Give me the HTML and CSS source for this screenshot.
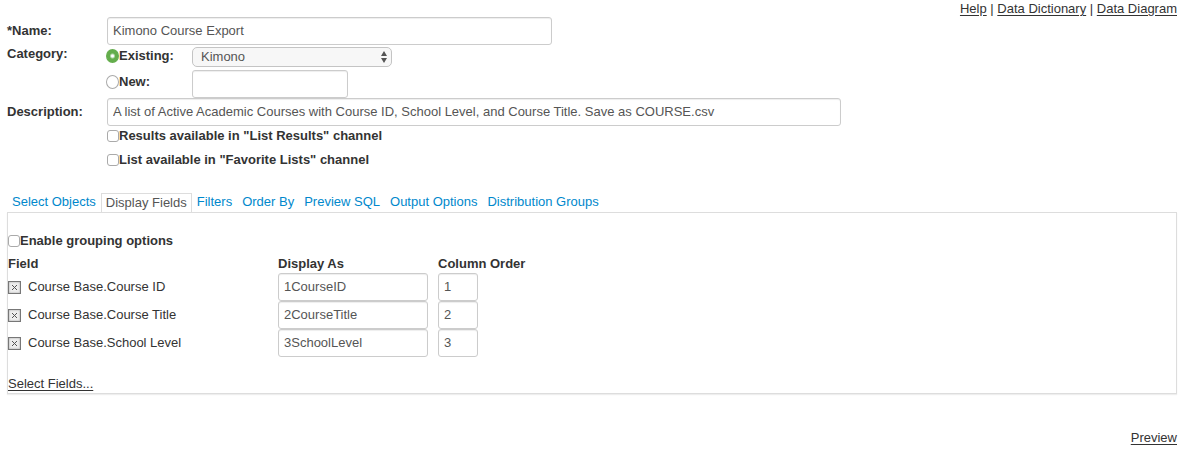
FILE: index.html
```html
<!DOCTYPE html>
<html lang="en">
<head>
<meta charset="utf-8">
<title>List Editor</title>
<link rel="stylesheet" href="styles.css">
</head>
<body>
<nav class="top-links"><a href="#">Help</a> | <a href="#">Data Dictionary</a> | <a href="#">Data Diagram</a></nav>
<form class="details">
  <label class="form-label" for="name">*Name:</label>
  <input class="text name-input" id="name" type="text" value="Kimono Course Export">

  <span class="form-label category-label">Category:</span>
  <div class="category">
    <label class="choice"><input class="radio" type="radio" name="category" checked>Existing:</label>
    <div class="select-wrap">
      <select class="select" aria-label="Existing category"><option>Kimono</option></select>
      <svg class="select-arrows" viewBox="0 0 6 12" aria-hidden="true"><path d="M3 0l3 5H0zM3 12l3-5H0z"/></svg>
    </div>
    <label class="choice"><input class="radio" type="radio" name="category">New:</label>
    <input class="text new-input" type="text" aria-label="New category">
  </div>

  <label class="form-label" for="description">Description:</label>
  <input class="text description-input" id="description" type="text" value="A list of Active Academic Courses with Course ID, School Level, and Course Title. Save as COURSE.csv">

  <div class="channels">
    <label class="choice"><input class="check" type="checkbox">Results available in "List Results" channel</label>
    <label class="choice"><input class="check" type="checkbox">List available in "Favorite Lists" channel</label>
  </div>
</form>

<nav class="tabs">
  <a class="tab" href="#">Select Objects</a>
  <a class="tab active" href="#">Display Fields</a>
  <a class="tab" href="#">Filters</a>
  <a class="tab" href="#">Order By</a>
  <a class="tab" href="#">Preview SQL</a>
  <a class="tab" href="#">Output Options</a>
  <a class="tab" href="#">Distribution Groups</a>
</nav>
<section class="panel">
  <label class="choice"><input class="check" type="checkbox">Enable grouping options</label>
  <table class="fields">
    <thead>
      <tr><th class="col-field">Field</th><th class="col-display">Display As</th><th>Column Order</th></tr>
    </thead>
    <tbody>
      <tr>
        <td><div class="field"><button class="remove" type="button" aria-label="Remove Course ID"><svg class="cross" viewBox="0 0 7 7"><path d="M1 1l5 5M6 1L1 6"/></svg></button>Course Base.Course ID</div></td>
        <td><input class="text display-input" type="text" value="1CourseID" aria-label="Display as"></td>
        <td><input class="text order-input" type="text" value="1" aria-label="Column order"></td>
      </tr>
      <tr>
        <td><div class="field"><button class="remove" type="button" aria-label="Remove Course Title"><svg class="cross" viewBox="0 0 7 7"><path d="M1 1l5 5M6 1L1 6"/></svg></button>Course Base.Course Title</div></td>
        <td><input class="text display-input" type="text" value="2CourseTitle" aria-label="Display as"></td>
        <td><input class="text order-input" type="text" value="2" aria-label="Column order"></td>
      </tr>
      <tr>
        <td><div class="field"><button class="remove" type="button" aria-label="Remove School Level"><svg class="cross" viewBox="0 0 7 7"><path d="M1 1l5 5M6 1L1 6"/></svg></button>Course Base.School Level</div></td>
        <td><input class="text display-input" type="text" value="3SchoolLevel" aria-label="Display as"></td>
        <td><input class="text order-input" type="text" value="3" aria-label="Column order"></td>
      </tr>
    </tbody>
  </table>
  <a class="select-fields" href="#">Select Fields...</a>
</section>
<footer class="footer"><a href="#">Preview</a></footer>
</body>
</html>
```
FILE: styles.css
```css
* { box-sizing: border-box; }
body {
  margin: 0;
  padding: 0 11px 0 7px;
  background: #fff;
  color: #333;
  font: 13px/20px "Liberation Sans", Arial, sans-serif;
}
a { color: #333; text-underline-offset: 2px; }
input, select, button { margin: 0; font: inherit; }

.top-links { text-align: right; line-height: 17px; }

.details {
  display: grid;
  grid-template-columns: 100px 1fr;
}
.form-label { font-weight: bold; line-height: 28px; }
.category-label { line-height: 18px; }
.text {
  display: block;
  max-width: 100%;
  height: 28px;
  padding: 0 5px 2px;
  border: 1px solid #ccc;
  border-radius: 3px;
  background: #fff;
  box-shadow: inset 0 1px 1px #eee;
  color: #555;
}
.name-input { width: 445px; }
.new-input { width: 156px; }
.description-input { width: 734px; }
.display-input { width: 150px; }
.order-input { width: 40px; }

.category {
  display: grid;
  grid-template-columns: 85px 200px;
  grid-template-rows: 25px 28px;
}
.choice {
  display: flex;
  align-items: center;
  font-weight: bold;
}
.category .choice { margin-left: -1px; line-height: 22px; align-self: start; }
.category .text { grid-column: 2; }
.radio, .check {
  appearance: none;
  flex: none;
  border: 1px solid #aaa;
  background: #fff;
}
.radio { width: 13px; height: 14px; border-radius: 50%; }
.radio:checked {
  border-color: #64ad4c;
  background: radial-gradient(circle, #fff 1px, #64ad4c 3px);
}
.check { width: 12px; height: 12px; border-radius: 3px; }

.select-wrap { position: relative; height: 20px; margin-top: 2px; }
.select {
  display: block;
  appearance: none;
  width: 100%;
  height: 20px;
  padding: 0 8px;
  border: 1px solid #c4c4c4;
  border-radius: 5px;
  background: #f7f7f7;
  color: #555;
  line-height: 18px;
}
.select-arrows {
  position: absolute;
  top: 4px;
  right: 5px;
  width: 6px;
  height: 12px;
  fill: #555;
}
.category .choice:nth-of-type(2) { line-height: 24px; }
.channels {
  grid-column: 2;
  display: grid;
  gap: 4px;
}

.tabs {
  display: flex;
  margin-top: 23px;
}
.tab {
  height: 19px;
  padding: 0 5px;
  color: #0088cc;
  line-height: 18px;
  text-decoration: none;
}
.active {
  position: relative;
  height: 19px;
  padding: 0 4px;
  border: 1px solid #ddd;
  border-bottom: 0;
  background: #fff;
  color: #555;
}
.panel {
  padding-top: 18px;
  border: 1px solid #ddd;
  box-shadow: 0 1px 1px #eee;
}
.fields { border-collapse: collapse; }
.fields th { padding: 3px 0 0; text-align: left; line-height: 19px; }
.fields td { padding: 0; }
.col-field { width: 270px; }
.col-display { width: 160px; }
.field { display: flex; align-items: center; gap: 7px; }
.remove {
  display: grid;
  place-items: center;
  width: 13px;
  height: 13px;
  padding: 0;
  border: 1px solid #777;
  background: #eee;
  box-shadow: inset 0 0 2px #999;
}
.cross { width: 7px; height: 7px; fill: none; stroke: #555; }
.select-fields { display: block; width: max-content; margin-top: 17px; line-height: 19px; }
.footer { margin-top: 34px; text-align: right; }
```
